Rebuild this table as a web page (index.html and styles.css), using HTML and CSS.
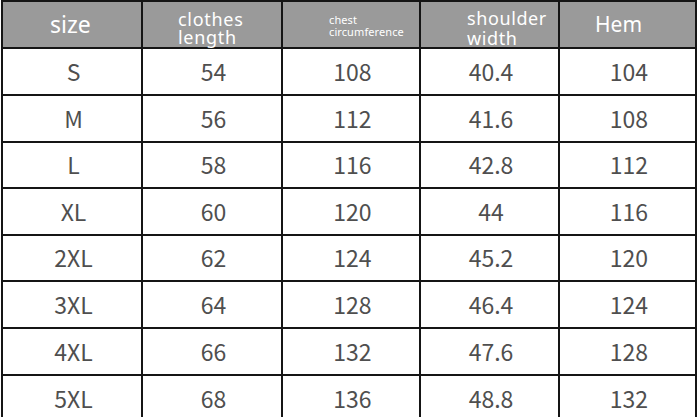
FILE: index.html
```html
<!DOCTYPE html>
<html>
<head>
<meta charset="utf-8">
<link rel="stylesheet" href="styles.css">
</head>
<body>
<div class="chart">
  <div class="hcell h-size">size</div>
  <div class="hcell h-len"><span class="ln">clothes</span><span class="ln">length</span></div>
  <div class="hcell h-chest"><span class="ln">chest</span><span class="ln">circumference</span></div>
  <div class="hcell h-sh"><span class="ln">shoulder</span><span class="ln">width</span></div>
  <div class="hcell h-hem">Hem</div>

  <div class="cell">S</div><div class="cell">54</div><div class="cell">108</div><div class="cell">40.4</div><div class="cell">104</div>
  <div class="cell">M</div><div class="cell">56</div><div class="cell">112</div><div class="cell">41.6</div><div class="cell">108</div>
  <div class="cell">L</div><div class="cell">58</div><div class="cell">116</div><div class="cell">42.8</div><div class="cell">112</div>
  <div class="cell">XL</div><div class="cell">60</div><div class="cell">120</div><div class="cell">44</div><div class="cell">116</div>
  <div class="cell">2XL</div><div class="cell">62</div><div class="cell">124</div><div class="cell">45.2</div><div class="cell">120</div>
  <div class="cell">3XL</div><div class="cell">64</div><div class="cell">128</div><div class="cell">46.4</div><div class="cell">124</div>
  <div class="cell">4XL</div><div class="cell">66</div><div class="cell">132</div><div class="cell">47.6</div><div class="cell">128</div>
  <div class="cell">5XL</div><div class="cell">68</div><div class="cell">136</div><div class="cell">48.8</div><div class="cell">132</div>
</div>
</body>
</html>
```

FILE: styles.css
```css
html, body {
  margin: 0;
  padding: 0;
  background: #ffffff;
  overflow: hidden;
}

.chart {
  margin-left: 1px;
  width: 692px;
  height: 420px;
  background: #151515;
  padding: 2px 2px 0 2px;
  display: grid;
  grid-template-columns: 138px 138px 136px 137px 135px;
  grid-template-rows: 45px 45px 45px 44px 45px 44px 45px 45px 45px;
  gap: 2px;
  box-sizing: content-box;
}

.hcell {
  background: #9a9a9a;
  color: #ffffff;
  font-family: "Noto Sans", "Open Sans", sans-serif;
  box-sizing: border-box;
  display: flex;
  flex-direction: column;
  align-items: flex-start;
}

.ln {
  display: block;
  white-space: nowrap;
}

.h-size {
  font-size: 23px;
  line-height: 23px;
  padding: 11px 0 0 47px;
}

.h-len {
  font-size: 18px;
  line-height: 18px;
  padding: 8px 0 0 35px;
  letter-spacing: 0.7px;
}

.h-chest {
  font-size: 11px;
  line-height: 12px;
  padding: 12px 0 0 46px;
  letter-spacing: 0.1px;
}

.h-sh {
  font-size: 18px;
  line-height: 20px;
  padding: 6px 0 0 46px;
  letter-spacing: 0.6px;
}

.h-hem {
  font-size: 21px;
  line-height: 21px;
  padding: 12px 0 0 35px;
}

.cell {
  background: #ffffff;
  color: #4f4f4f;
  font-family: "Noto Sans CJK SC", "Noto Sans", sans-serif;
  font-size: 23px;
  display: flex;
  align-items: center;
  justify-content: center;
  padding: 0 0 2px 3px;
  box-sizing: border-box;
}
```
